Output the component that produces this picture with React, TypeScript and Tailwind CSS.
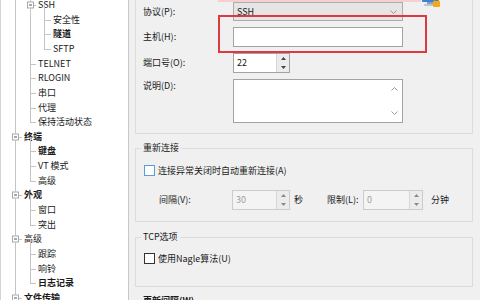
import React from "react";

type TreeNode = {
  label: string;
  level: 1 | 2 | 3;
  bold?: boolean;
  expander?: boolean;
  last?: boolean;
};

const tree: TreeNode[] = [
  { label: "SSH", level: 2, expander: true },
  { label: "安全性", level: 3 },
  { label: "隧道", level: 3, bold: true },
  { label: "SFTP", level: 3, last: true },
  { label: "TELNET", level: 2 },
  { label: "RLOGIN", level: 2 },
  { label: "串口", level: 2 },
  { label: "代理", level: 2 },
  { label: "保持活动状态", level: 2, last: true },
  { label: "终端", level: 1, bold: true, expander: true },
  { label: "键盘", level: 2, bold: true },
  { label: "VT 模式", level: 2 },
  { label: "高级", level: 2, last: true },
  { label: "外观", level: 1, bold: true, expander: true },
  { label: "窗口", level: 2 },
  { label: "突出", level: 2, last: true },
  { label: "高级", level: 1, expander: true },
  { label: "跟踪", level: 2 },
  { label: "响铃", level: 2 },
  { label: "日志记录", level: 2, bold: true, last: true },
  { label: "文件传输", level: 1, bold: true, expander: true },
];

// small [-] box on expanded nodes
function Expander({ className }: { className: string }) {
  return (
    <span
      className={`absolute top-1/2 flex h-[7px] w-[7px] -translate-y-1/2 items-center justify-center border border-[#a8a8a8] bg-white ${className}`}
    >
      <span className="h-px w-[3px] bg-[#555]" />
    </span>
  );
}

function TreeRow({ node }: { node: TreeNode }) {
  const pad =
    node.level === 1 ? "pl-[23px]" : node.level === 2 ? "pl-[37px]" : "pl-[52px]";
  return (
    <div className={`relative flex h-[14.65px] items-center ${pad}`}>
      {/* level 1 guide */}
      <span className="absolute left-[14px] top-0 h-full w-px bg-[#c4c4c4]" />
      {/* level 2 guide */}
      {node.level === 1 && node.expander && (
        <span className="absolute left-[29px] top-1/2 h-1/2 w-px bg-[#c4c4c4]" />
      )}
      {node.level === 2 && (
        <span
          className={`absolute left-[29px] top-0 w-px bg-[#c4c4c4] ${node.last ? "h-1/2" : "h-full"}`}
        />
      )}
      {node.level === 3 && (
        <span className="absolute left-[29px] top-0 h-full w-px bg-[#c4c4c4]" />
      )}
      {/* level 3 guide */}
      {node.level === 2 && node.expander && (
        <span className="absolute left-[43px] top-1/2 h-1/2 w-px bg-[#c4c4c4]" />
      )}
      {node.level === 3 && (
        <span
          className={`absolute left-[43px] top-0 w-px bg-[#c4c4c4] ${node.last ? "h-1/2" : "h-full"}`}
        />
      )}
      {/* stubs */}
      {node.level === 1 && (
        <>
          <span className="absolute left-[18px] top-1/2 h-px w-[3px] bg-[#c4c4c4]" />
          <Expander className="left-[11px]" />
        </>
      )}
      {node.level === 2 && !node.expander && (
        <span className="absolute left-[29px] top-1/2 h-px w-[6px] bg-[#c4c4c4]" />
      )}
      {node.level === 2 && node.expander && (
        <>
          <span className="absolute left-[32px] top-1/2 h-px w-[3px] bg-[#c4c4c4]" />
          <Expander className="left-[26px]" />
        </>
      )}
      {node.level === 3 && (
        <span className="absolute left-[43px] top-1/2 h-px w-[7px] bg-[#c4c4c4]" />
      )}
      <span className={`whitespace-nowrap ${node.bold ? "font-bold" : ""}`}>{node.label}</span>
    </div>
  );
}

function Arrow({ up, color }: { up?: boolean; color: string }) {
  return (
    <svg width="5" height="3" viewBox="0 0 5 3">
      <path d={up ? "M0 3 L2.5 0 L5 3 Z" : "M0 0 L2.5 3 L5 0 Z"} fill={color} />
    </svg>
  );
}

function Spinner({ disabled }: { disabled?: boolean }) {
  const c = disabled ? "#8a8a8a" : "#444";
  return (
    <div className="flex w-[13px] flex-col border-l border-[#d6d6d6] bg-[#ececec]">
      <div className="flex flex-1 items-center justify-center">
        <Arrow up color={c} />
      </div>
      <div className="flex flex-1 items-center justify-center">
        <Arrow color={c} />
      </div>
    </div>
  );
}

function Chevron({ up }: { up?: boolean }) {
  return (
    <svg width="7" height="4" viewBox="0 0 7 4">
      <path
        d={up ? "M0.5 3.5 L3.5 0.5 L6.5 3.5" : "M0.5 0.5 L3.5 3.5 L6.5 0.5"}
        fill="none"
        stroke="#9a9a9a"
        strokeWidth="1"
      />
    </svg>
  );
}

export default function App() {
  return (
    <div className="flex h-[300px] w-[480px] overflow-hidden bg-[#f0f0f0] font-['Noto_Sans_CJK_SC',sans-serif] text-[9px] leading-[12px] text-[#1a1a1a]">
      {/* Left: category tree */}
      <div className="w-[129px] shrink-0 border-x border-l-[#d4d4d4] border-r-[#c8c8c8] bg-white">
        <div className="mt-[-2.3px]">
          {tree.map((node, i) => (
            <TreeRow key={i} node={node} />
          ))}
        </div>
      </div>

      {/* Right: settings */}
      <div className="relative flex-1 pl-[6px] pr-[7px]">
        {/* connection group (top cut off) */}
        <div className="mt-[-10px] h-[144px] border-x border-b border-[#dcdcdc] pl-[7px]">
          <div className="flex flex-col gap-[6px] pt-[12px]">
            <div className="flex items-center">
              <span className="w-[90px]">协议(P):</span>
              <div className="flex h-[19px] w-[170px] items-center justify-between border border-[#adadad] bg-[#e5e5e5] pl-[3px] pr-[5px]">
                <span>SSH</span>
                <Chevron />
              </div>
            </div>
            <div className="flex items-center">
              <span className="w-[90px]">主机(H):</span>
              <div className="h-[20px] w-[170px] border border-[#a3a3a3] bg-white" />
            </div>
            <div className="flex items-center">
              <span className="w-[90px]">端口号(O):</span>
              <div className="flex h-[20px] w-[57px] border border-[#a3a3a3] bg-white">
                <span className="flex-1 pl-[3px] leading-[18px]">22</span>
                <Spinner />
              </div>
            </div>
            <div className="flex items-start">
              <span className="w-[90px] pt-px">说明(D):</span>
              <div className="flex h-[44px] w-[170px] justify-end border border-[#a3a3a3] bg-white">
                <div className="flex w-[16px] flex-col items-center justify-between py-[7px]">
                  <Chevron up />
                  <Chevron />
                </div>
              </div>
            </div>
          </div>
        </div>

        {/* reconnect group */}
        <fieldset className="mt-[8px] border border-[#dcdcdc] px-[5px] pb-[11px]">
          <legend className="px-[2px] leading-[12px]">重新连接</legend>
          <div className="ml-[3px] mt-[11px] flex h-[11px] items-center gap-[3px]">
            <span className="h-[11px] w-[11px] border border-[#5a9bd8] bg-white" />
            <span className="whitespace-nowrap">连接异常关闭时自动重新连接(A)</span>
          </div>
          <div className="ml-[18px] mt-[14px] flex h-[20px] items-center">
            <span className="w-[73px]">间隔(V):</span>
            <div className="flex h-[20px] w-[58px] border border-[#cccccc] bg-[#f4f4f4] text-[#a0a0a0]">
              <span className="flex-1 pl-[3px] leading-[18px]">30</span>
              <Spinner disabled />
            </div>
            <span className="ml-[4px] w-[33px]">秒</span>
            <span className="w-[36px] whitespace-nowrap">限制(L):</span>
            <div className="flex h-[20px] w-[60px] border border-[#cccccc] bg-[#f4f4f4] text-[#a0a0a0]">
              <span className="flex-1 pl-[3px] leading-[18px]">0</span>
              <Spinner disabled />
            </div>
            <span className="ml-[8px]">分钟</span>
          </div>
        </fieldset>

        {/* TCP group */}
        <fieldset className="mt-[9px] border border-[#dcdcdc] px-[5px] pb-[22px]">
          <legend className="px-[2px] leading-[12px]">TCP选项</legend>
          <div className="ml-[3px] mt-[10px] flex h-[11px] items-center gap-[3px]">
            <span className="h-[11px] w-[11px] border border-[#333333] bg-white" />
            <span className="whitespace-nowrap">使用Nagle算法(U)</span>
          </div>
        </fieldset>

        <div className="ml-[8px] mt-[8px] font-bold">更新间隔(W)</div>

        {/* red highlight around host field */}
        <div className="absolute left-[89px] top-[15px] h-[38px] w-[209px] border-2 border-[#dc3a40]" />
        <div className="absolute left-[89px] top-0 h-[2px] w-[203px] bg-[#f7cfd1]" />

        {/* session icon, mostly cut off */}
        <svg className="absolute left-[290px] top-[-14px]" width="24" height="24" viewBox="0 0 24 24">
          <rect x="3" y="2" width="16" height="14" rx="1" fill="#3b82d6" />
          <rect x="5" y="4" width="12" height="9" fill="#9fd0f5" />
          <rect x="8" y="16" width="6" height="2" fill="#8aa0b8" />
          <rect x="5" y="18" width="12" height="2" rx="1" fill="#b8c4d0" />
          <rect x="14" y="15" width="7" height="6" rx="1" fill="#f0a81c" />
          <path d="M15.5 15 V13.5 a2 2 0 0 1 4 0 V15" fill="none" stroke="#c98a10" strokeWidth="1" />
        </svg>
      </div>
    </div>
  );
}
